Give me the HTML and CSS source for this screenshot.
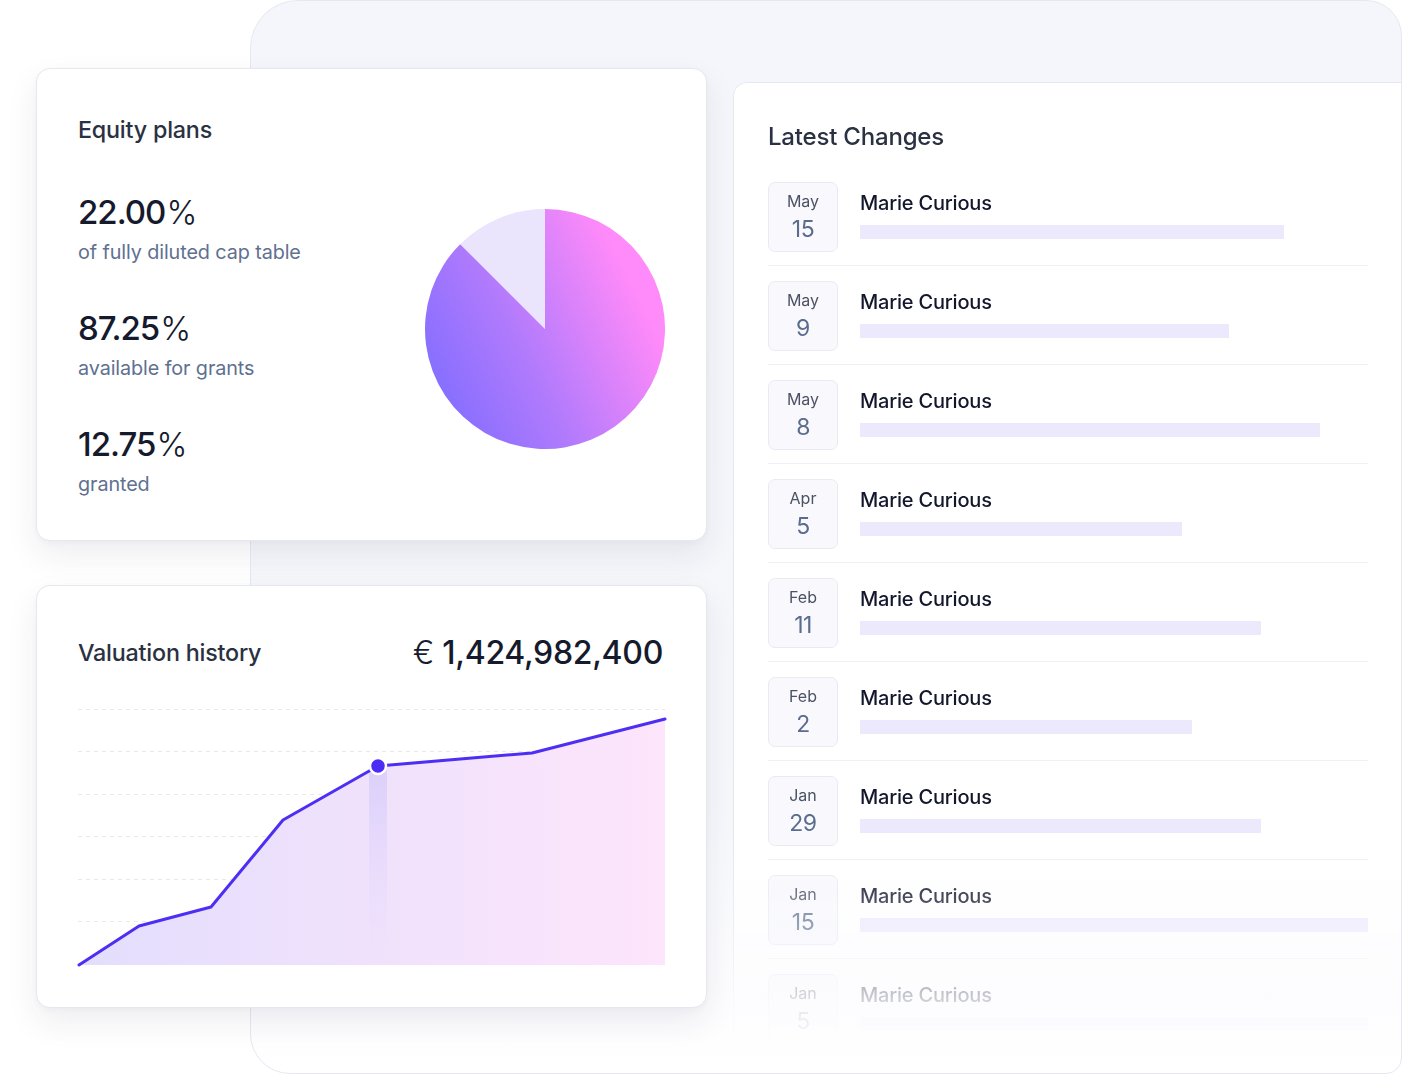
FILE: index.html
```html
<!DOCTYPE html>
<html lang="en">
<head>
<meta charset="utf-8">
<title>Equity dashboard</title>
<link rel="stylesheet" href="styles.css">
</head>
<body>
<div class="stage">
  <div class="col-left">
    <section class="card equity">
      <h2 class="card-title">Equity plans</h2>
      <div class="equity-body">
        <div class="stats">
          <div class="stat">
            <div class="stat-num">22.00<span class="pct">%</span></div>
            <div class="stat-label">of fully diluted cap table</div>
          </div>
          <div class="stat">
            <div class="stat-num">87.25<span class="pct">%</span></div>
            <div class="stat-label">available for grants</div>
          </div>
          <div class="stat">
            <div class="stat-num">12.75<span class="pct">%</span></div>
            <div class="stat-label">granted</div>
          </div>
        </div>
        <svg class="pie" width="240" height="240" viewBox="0 0 240 240" aria-hidden="true">
          <defs>
            <linearGradient id="pieGrad" x1="0" y1="0.85" x2="1" y2="0.35">
              <stop offset="0" stop-color="#7c6cff"/>
              <stop offset="0.45" stop-color="#b47bfc"/>
              <stop offset="0.9" stop-color="#ff8af9"/>
            </linearGradient>
          </defs>
          <path d="M120 120 L120 0 A120 120 0 0 0 35.15 35.15 Z" fill="#ebe4fd"/>
          <path d="M120 120 L120 0 A120 120 0 1 1 35.15 35.15 Z" fill="url(#pieGrad)"/>
        </svg>
      </div>
    </section>

    <section class="card valuation">
      <div class="val-head">
        <h2 class="card-title">Valuation history</h2>
        <div class="val-amount"><span class="cur">€</span> 1,424,982,400</div>
      </div>
      <svg class="chart" width="587" height="262" viewBox="0 0 587 262" aria-hidden="true">
        <defs>
          <linearGradient id="areaGrad" x1="0" y1="0" x2="1" y2="0">
            <stop offset="0" stop-color="#e3defd"/>
            <stop offset="1" stop-color="#fde5fb"/>
          </linearGradient>
          <linearGradient id="barGrad" x1="0" y1="0" x2="0" y2="1">
            <stop offset="0" stop-color="#d9cdfb" stop-opacity="0.9"/>
            <stop offset="1" stop-color="#e6dcfc" stop-opacity="0"/>
          </linearGradient>
        </defs>
        <g stroke="#e7e8f1" stroke-width="1" stroke-dasharray="4 4">
          <line x1="0" y1="3.5" x2="587" y2="3.5"/>
          <line x1="0" y1="45.5" x2="587" y2="45.5"/>
          <line x1="0" y1="88.5" x2="587" y2="88.5"/>
          <line x1="0" y1="130.5" x2="587" y2="130.5"/>
          <line x1="0" y1="173.5" x2="587" y2="173.5"/>
          <line x1="0" y1="215.5" x2="587" y2="215.5"/>
        </g>
        <path d="M1 259 L61 220 L133 201 L205 114 L300 60 L454 47 L587 13 L587 259 Z" fill="url(#areaGrad)"/>
        <rect x="291" y="62" width="18" height="197" fill="url(#barGrad)"/>
        <polyline points="1,259 61,220 133,201 205,114 300,60 454,47 587,13" fill="none" stroke="#4c2ff3" stroke-width="3" stroke-linejoin="round" stroke-linecap="round"/>
        <circle cx="300" cy="60" r="8" fill="#4a2cf5" stroke="#ffffff" stroke-width="2.5"/>
      </svg>
    </section>
  </div>

  <section class="changes">
    <h2 class="changes-title">Latest Changes</h2>
    <ul class="list">
      <li class="row"><div class="date"><span class="mon">May</span><span class="day">15</span></div><div class="info"><div class="name">Marie Curious</div><div class="bar" style="width:424px"></div></div></li>
      <li class="row"><div class="date"><span class="mon">May</span><span class="day">9</span></div><div class="info"><div class="name">Marie Curious</div><div class="bar" style="width:369px"></div></div></li>
      <li class="row"><div class="date"><span class="mon">May</span><span class="day">8</span></div><div class="info"><div class="name">Marie Curious</div><div class="bar" style="width:460px"></div></div></li>
      <li class="row"><div class="date"><span class="mon">Apr</span><span class="day">5</span></div><div class="info"><div class="name">Marie Curious</div><div class="bar" style="width:322px"></div></div></li>
      <li class="row"><div class="date"><span class="mon">Feb</span><span class="day">11</span></div><div class="info"><div class="name">Marie Curious</div><div class="bar" style="width:401px"></div></div></li>
      <li class="row"><div class="date"><span class="mon">Feb</span><span class="day">2</span></div><div class="info"><div class="name">Marie Curious</div><div class="bar" style="width:332px"></div></div></li>
      <li class="row"><div class="date"><span class="mon">Jan</span><span class="day">29</span></div><div class="info"><div class="name">Marie Curious</div><div class="bar" style="width:401px"></div></div></li>
      <li class="row"><div class="date"><span class="mon">Jan</span><span class="day">15</span></div><div class="info"><div class="name">Marie Curious</div><div class="bar" style="width:100%"></div></div></li>
      <li class="row"><div class="date"><span class="mon">Jan</span><span class="day">5</span></div><div class="info"><div class="name">Marie Curious</div><div class="bar" style="width:100%"></div></div></li>
    </ul>
  </section>
</div>
</body>
</html>
```

FILE: styles.css
```css
* { box-sizing: border-box; }

html, body {
  margin: 0;
  padding: 0;
  background: #ffffff;
}

body {
  font-family: Inter, "Liberation Sans", sans-serif;
  color: #151a2d;
  width: 1407px;
  height: 1078px;
  overflow: hidden;
}

.stage {
  margin-left: 250px;
  width: 1152px;
  height: 1074px;
  border: 1px solid #e6e8f1;
  border-radius: 48px 36px 16px 40px;
  background: linear-gradient(180deg, #f5f6fb 0%, #f6f7fb 75%, #fdfdff 94%, #ffffff 100%);
  display: flex;
  align-items: flex-start;
  padding-top: 67px;
}

.col-left {
  margin-left: -215px;
  width: 671px;
  flex-shrink: 0;
  display: flex;
  flex-direction: column;
  gap: 44px;
  position: relative;
  z-index: 1;
}

.card {
  background: #ffffff;
  border: 1px solid #e6e8ef;
  border-radius: 14px;
  box-shadow: 0 14px 32px rgba(40, 44, 80, 0.08), 0 2px 6px rgba(40, 44, 80, 0.03);
  padding: 47px 43px 0 41px;
}

.card-title {
  margin: 0;
  font-size: 23.3px;
  line-height: 28px;
  font-weight: 500;
  color: #2a3142;
  letter-spacing: -0.2px;
}

/* Equity */
.equity { height: 473px; }

.equity-body {
  display: flex;
  justify-content: space-between;
  align-items: flex-start;
  margin-top: 48px;
}

.stat { margin-bottom: 44px; }

.stat-num {
  font-size: 33px;
  line-height: 40px;
  font-weight: 500;
  letter-spacing: -1px;
  color: #151a2d;
}

.pct {
  font-weight: 300;
  letter-spacing: 0;
  margin-left: 1px;
}

.stat-label {
  margin-top: 8px;
  font-size: 19.8px;
  line-height: 24px;
  color: #607090;
  letter-spacing: -0.1px;
}

.pie {
  display: block;
  margin-top: 17px;
  margin-right: -2px;
}

/* Valuation */
.valuation { height: 423px; }

.val-head {
  display: flex;
  justify-content: space-between;
  align-items: center;
  height: 40px;
}

.val-amount {
  font-size: 32px;
  line-height: 40px;
  font-weight: 500;
  letter-spacing: -0.3px;
  color: #151a2d;
  margin-right: 0;
}

.cur { font-weight: 300; }

.chart {
  display: block;
  margin-top: 33px;
  overflow: visible;
}

/* Latest changes */
.changes {
  flex: 1;
  margin-left: 26px;
  margin-top: 14px;
  height: 980px;
  background: #ffffff;
  border-top: 1px solid #e6e8f1;
  border-left: 1px solid #e6e8f1;
  border-top-left-radius: 14px;
  padding: 39px 33px 0 34px;
  -webkit-mask-image: linear-gradient(180deg, #000 0, #000 770px, rgba(0,0,0,0.45) 880px, rgba(0,0,0,0.12) 930px, transparent 975px);
  mask-image: linear-gradient(180deg, #000 0, #000 770px, rgba(0,0,0,0.45) 880px, rgba(0,0,0,0.12) 930px, transparent 975px);
}

.changes-title {
  margin: 0 0 15px;
  font-size: 24px;
  line-height: 30px;
  font-weight: 500;
  color: #2a3142;
  letter-spacing: -0.2px;
}

.list {
  list-style: none;
  margin: 0;
  padding: 0;
}

.row {
  display: flex;
  align-items: flex-start;
  padding: 15px 0 13px;
  border-bottom: 1px solid #eff0f6;
}

.date {
  width: 70px;
  height: 70px;
  flex-shrink: 0;
  border: 1px solid #e9ebf3;
  border-radius: 7px;
  background: #f9f9fd;
  display: flex;
  flex-direction: column;
  align-items: center;
  justify-content: center;
  gap: 4px;
}

.mon {
  font-size: 16px;
  line-height: 20px;
  color: #4a5264;
}

.day {
  font-size: 23px;
  line-height: 28px;
  color: #5a6d8e;
  letter-spacing: -0.5px;
}

.info {
  flex: 1;
  margin-left: 22px;
  padding-top: 9px;
}

.name {
  font-size: 20px;
  line-height: 24px;
  font-weight: 500;
  color: #12172b;
  letter-spacing: -0.2px;
}

.bar {
  margin-top: 10px;
  height: 14px;
  background: #ede9fd;
}
```
